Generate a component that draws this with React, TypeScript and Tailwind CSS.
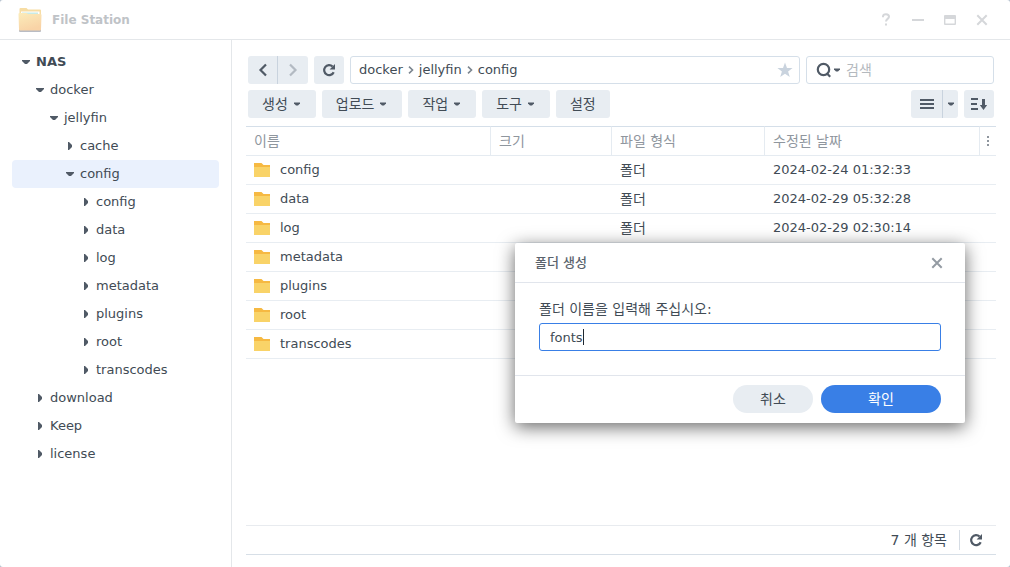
import { useState } from 'react'

type TreeNode = {
  name: string
  indent: string
  open?: boolean
  bold?: boolean
  selected?: boolean
}

const tree: TreeNode[] = [
  { name: 'NAS', indent: 'pl-[10px]', open: true, bold: true },
  { name: 'docker', indent: 'pl-[24px]', open: true },
  { name: 'jellyfin', indent: 'pl-[38px]', open: true },
  { name: 'cache', indent: 'pl-[54px]' },
  { name: 'config', indent: 'pl-[54px]', open: true, selected: true },
  { name: 'config', indent: 'pl-[70px]' },
  { name: 'data', indent: 'pl-[70px]' },
  { name: 'log', indent: 'pl-[70px]' },
  { name: 'metadata', indent: 'pl-[70px]' },
  { name: 'plugins', indent: 'pl-[70px]' },
  { name: 'root', indent: 'pl-[70px]' },
  { name: 'transcodes', indent: 'pl-[70px]' },
  { name: 'download', indent: 'pl-[24px]' },
  { name: 'Keep', indent: 'pl-[24px]' },
  { name: 'license', indent: 'pl-[24px]' },
]

type FileRow = {
  name: string
  type?: string
  date?: string
}

const files: FileRow[] = [
  { name: 'config', type: '폴더', date: '2024-02-24 01:32:33' },
  { name: 'data', type: '폴더', date: '2024-02-29 05:32:28' },
  { name: 'log', type: '폴더', date: '2024-02-29 02:30:14' },
  { name: 'metadata' },
  { name: 'plugins' },
  { name: 'root' },
  { name: 'transcodes' },
]

const actions = [
  { label: '생성', menu: true },
  { label: '업로드', menu: true },
  { label: '작업', menu: true },
  { label: '도구', menu: true },
  { label: '설정', menu: false },
]

export default function App() {
  const [dialogOpen, setDialogOpen] = useState(true)

  return (
    <div className="bg-[#b4c0ce] font-['DejaVu_Sans','Noto_Sans_CJK_KR',sans-serif] text-[13px] leading-5 text-[#414b55]">
      <div className="relative flex min-h-screen flex-col overflow-hidden rounded-[3px] bg-white">
        <TitleBar />
        <div className="flex flex-1">
          <Sidebar />
          <main className="flex min-w-0 flex-1 flex-col px-[14px] pt-4 pb-3">
            <Toolbar />
            <FileTable />
            <footer className="mt-auto flex h-[30px] items-center justify-end border-t border-b border-t-[#e8ebef] border-b-[#d7dfe7] pr-[13px]">
              <span className="pr-3 text-sm leading-5">7 개 항목</span>
              <span className="h-5 w-px bg-[#d5dce4]" />
              <button aria-label="새로 고침" className="ml-[9px]">
                <RefreshIcon />
              </button>
            </footer>
          </main>
        </div>
        {dialogOpen && <CreateFolderDialog onClose={() => setDialogOpen(false)} />}
      </div>
    </div>
  )
}

function TitleBar() {
  return (
    <header className="flex h-10 items-center border-b border-[#e4e7ea] pr-5 pl-[18px]">
      <AppIcon />
      <h1 className="ml-[10px] text-xs font-bold text-[#bfc3c7]">File Station</h1>
      <div className="ml-auto flex gap-4 text-[#d5d7da]">
        <button aria-label="도움말" className="flex w-4 justify-center">
          <svg width="16" height="16" viewBox="0 0 16 16" fill="none" stroke="currentColor" strokeWidth="2">
            <path d="M5 5.2V4.6C5 3 6.2 2.2 8 2.2s3 .9 3 2.5c0 2.1-3 2.3-3 4.8" />
            <path d="M8 11.5v2" />
          </svg>
        </button>
        <button aria-label="최소화">
          <svg width="16" height="16" viewBox="0 0 16 16" fill="currentColor">
            <path d="M2 7h12v2H2z" />
          </svg>
        </button>
        <button aria-label="최대화">
          <svg width="16" height="16" viewBox="0 0 16 16" fill="currentColor" fillRule="evenodd">
            <path d="M3 3h10a1 1 0 0 1 1 1v8a1 1 0 0 1-1 1H3a1 1 0 0 1-1-1V4a1 1 0 0 1 1-1zm.4 4v4.6h9.2V7z" />
          </svg>
        </button>
        <button aria-label="닫기">
          <CloseIcon />
        </button>
      </div>
    </header>
  )
}

function Sidebar() {
  return (
    <nav className="w-[232px] shrink-0 border-r border-[#e4e7ea] px-3 pt-2">
      <ul>
        {tree.map((node, i) => (
          <li key={i}>
            <button
              className={`flex h-7 w-full items-center gap-1.5 rounded text-left leading-[22px] ${node.indent} ${
                node.selected ? 'bg-[#eaf1fd]' : ''
              } ${node.bold ? 'font-bold' : ''}`}
            >
              <svg width="8" height="8" viewBox="0 0 8 8" fill="#505a66">
                {node.open ? <path d="M0 2h8v1L5 6H3L0 3z" /> : <path d="M2 0h1l3 3v2L3 8H2z" />}
              </svg>
              {node.name}
            </button>
          </li>
        ))}
      </ul>
    </nav>
  )
}

function Toolbar() {
  return (
    <div className="flex flex-col gap-1.5 px-0.5 pb-2">
      <div className="flex h-7 gap-1.5">
        <div className="flex overflow-hidden rounded-[3px] bg-[#e8edf2]">
          <button aria-label="뒤로" className="flex w-[30px] items-center justify-center border-r border-[#c9d3de]">
            <svg width="10" height="14" viewBox="0 0 10 14" fill="none" stroke="#505a66" strokeWidth="2.2">
              <path d="M8 1.5 2.5 7 8 12.5" />
            </svg>
          </button>
          <button aria-label="앞으로" className="flex w-[30px] items-center justify-center">
            <svg width="10" height="14" viewBox="0 0 10 14" fill="none" stroke="#b3bac2" strokeWidth="2.2">
              <path d="M2 1.5 7.5 7 2 12.5" />
            </svg>
          </button>
        </div>
        <button
          aria-label="새로 고침"
          className="flex w-[30px] items-center justify-center rounded-[3px] bg-[#e8edf2]"
        >
          <RefreshIcon />
        </button>
        <div className="flex min-w-0 flex-1 items-center rounded-[3px] border border-[#d5dfe9] pr-1.5 pl-2">
          <a href="#docker">docker</a>
          <PathArrow />
          <a href="#jellyfin">jellyfin</a>
          <PathArrow />
          <a href="#config">config</a>
          <button aria-label="즐겨찾기" className="ml-auto">
            <svg width="16" height="16" viewBox="0 0 16 16" fill="#c9d3de">
              <path d="M8 .5 10 6h5.6l-4.5 3.4 1.7 5.6L8 11.7 3.2 15l1.7-5.6L.4 6H6z" />
            </svg>
          </button>
        </div>
        <div className="flex w-[188px] items-center rounded-[3px] border border-[#d5dfe9] pl-[9px]">
          <button aria-label="검색 옵션" className="flex items-center gap-0.5">
            <svg width="16" height="16" viewBox="0 0 16 16" fill="none" stroke="#505a66" strokeWidth="2.2">
              <circle cx="7.5" cy="7.5" r="5.7" />
              <path d="m10.5 11 3.7 3.7" />
            </svg>
            <Caret />
          </button>
          <input
            type="text"
            aria-label="검색"
            placeholder="검색"
            className="ml-1.5 w-full min-w-0 text-sm outline-none placeholder:text-[#b4b9be]"
          />
        </div>
      </div>

      <div className="flex h-7 gap-1.5">
        {actions.map(action => (
          <button
            key={action.label}
            className={`flex items-center gap-1.5 rounded-[3px] bg-[#e8edf2] pl-[14px] text-sm ${
              action.menu ? 'pr-4' : 'pr-[14px]'
            }`}
          >
            {action.label}
            {action.menu && <Caret />}
          </button>
        ))}
        <div className="ml-auto flex overflow-hidden rounded-[3px] bg-[#e8edf2]">
          <button aria-label="보기 방식" className="flex w-8 items-center justify-center border-r border-[#c9d3de]">
            <svg width="14" height="10" viewBox="0 0 14 10" fill="#505a66">
              <path d="M0 0h14v2H0zM0 4h14v2H0zM0 8h14v2H0z" />
            </svg>
          </button>
          <button aria-label="보기 메뉴" className="flex w-[15px] items-center justify-center">
            <Caret />
          </button>
        </div>
        <button aria-label="정렬" className="flex w-[30px] items-center justify-center rounded-[3px] bg-[#e8edf2]">
          <svg width="16" height="12" viewBox="0 0 16 12" fill="#505a66">
            <path d="M0 0h7v2H0zM0 5h6v2H0zM0 10h7v2H0zM11 1h3v6h2.2l-3.7 5-3.7-5H11z" />
          </svg>
        </button>
      </div>
    </div>
  )
}

function FileTable() {
  const head = 'h-[30px] border-t border-b border-t-[#d5dfe9] border-b-[#e5ebf1] px-2 text-left text-sm leading-5 font-normal text-[#8f969e]'
  const cell = 'h-[29px] border-b border-[#e8edf2] px-2'

  return (
    <table className="w-full table-fixed border-separate border-spacing-0">
      <colgroup>
        <col className="w-[245px]" />
        <col className="w-[121px]" />
        <col className="w-[153px]" />
        <col />
        <col className="w-4" />
      </colgroup>
      <thead>
        <tr>
          <th className={`${head} border-r border-r-[#e5ebf1]`}>이름</th>
          <th className={`${head} border-r border-r-[#e5ebf1]`}>크기</th>
          <th className={`${head} border-r border-r-[#e5ebf1]`}>파일 형식</th>
          <th className={`${head} border-r border-r-[#e5ebf1]`}>수정된 날짜</th>
          <th className="border-t border-b border-t-[#d5dfe9] border-b-[#e5ebf1] p-0">
            <button aria-label="열 선택" className="flex w-full justify-center">
              <svg width="2" height="10" viewBox="0 0 2 10" fill="#8f969e">
                <path d="M0 0h2v2H0zM0 4h2v2H0zM0 8h2v2H0z" />
              </svg>
            </button>
          </th>
        </tr>
      </thead>
      <tbody>
        {files.map(file => (
          <tr key={file.name}>
            <td className={cell}>
              <span className="flex items-center gap-[10px] leading-[22px]">
                <svg width="16" height="14" viewBox="0 0 16 14">
                  <path d="M0 0h7.5L9.5 2H16v6H0z" fill="#f6b942" />
                  <path d="M0 4h16v10H0z" fill="#f9d368" />
                </svg>
                {file.name}
              </span>
            </td>
            <td className={cell}></td>
            <td className={`${cell} text-sm leading-5`}>{file.type}</td>
            <td className={cell}>{file.date}</td>
            <td className="border-b border-[#e8edf2]"></td>
          </tr>
        ))}
      </tbody>
    </table>
  )
}

function CreateFolderDialog({ onClose }: { onClose: () => void }) {
  const [name, setName] = useState('fonts')

  return (
    <form
      role="dialog"
      aria-labelledby="dialog-title"
      onSubmit={e => {
        e.preventDefault()
        onClose()
      }}
      className="absolute top-[243px] left-[515px] w-[450px] rounded-xs bg-white shadow-[0_4px_18px_rgba(0,0,0,0.6)]"
    >
      <div className="flex h-10 items-center justify-between border-b border-[#e1e5ec] px-5">
        <h2 id="dialog-title" className="font-medium text-[#5a636d]">폴더 생성</h2>
        <button type="button" aria-label="닫기" onClick={onClose} className="text-[#949ba3]">
          <CloseIcon />
        </button>
      </div>
      <div className="px-6 pt-4 pb-6">
        <label htmlFor="folder-name" className="block text-sm leading-5">폴더 이름을 입력해 주십시오:</label>
        <div className="relative mt-1">
          <input
            id="folder-name"
            type="text"
            value={name}
            onChange={e => setName(e.target.value)}
            className="block h-7 w-full rounded-[3px] border border-[#397fe6] px-[10px] outline-none"
          />
          {name === 'fonts' && <span className="absolute top-1.5 left-11 h-4 w-px bg-[#202830]" />}
        </div>
      </div>
      <div className="flex justify-end gap-2 border-t border-[#e1e5ec] px-6 pt-[9px] pb-[10px] text-sm">
        <button type="button" onClick={onClose} className="h-7 w-20 rounded-full bg-[#e8edf2]">취소</button>
        <button type="submit" className="h-7 w-[120px] rounded-full bg-[#397fe6] text-white">확인</button>
      </div>
    </form>
  )
}

function Caret() {
  return (
    <svg width="6" height="4" viewBox="0 0 6 4" fill="#505a66">
      <path d="M0 .5h6v1L4 3.5H2l-2-2z" />
    </svg>
  )
}

function PathArrow() {
  return (
    <svg width="6" height="8" viewBox="0 0 6 8" fill="none" stroke="#7b858f" strokeWidth="1.6" className="mx-[5px]">
      <path d="M1 .7 4.5 4 1 7.3" />
    </svg>
  )
}

function RefreshIcon() {
  return (
    <svg width="14" height="14" viewBox="0 0 14 14">
      <path d="M11.7 9.2A5 5 0 1 1 10.6 3.5" fill="none" stroke="#505a66" strokeWidth="2.2" />
      <path d="M13 1v5.6H7.6z" fill="#505a66" />
    </svg>
  )
}

function CloseIcon() {
  return (
    <svg width="16" height="16" viewBox="0 0 16 16" fill="none" stroke="currentColor" strokeWidth="2">
      <path d="m3.3 3.3 9.4 9.4M12.7 3.3l-9.4 9.4" />
    </svg>
  )
}

function AppIcon() {
  return (
    <svg width="24" height="24" viewBox="0 0 24 24">
      <defs>
        <linearGradient id="folder-front" x1="0" y1="0" x2="0.4" y2="1">
          <stop offset="0" stopColor="#fbecba" />
          <stop offset="1" stopColor="#f9d3a6" />
        </linearGradient>
      </defs>
      <path d="M1.5 1a1 1 0 0 1 1-1h6l1.5 1.5h12a1 1 0 0 1 1 1V12h-21.5z" fill="#f7dda4" />
      <path d="M3 3.5h18.5V10H3z" fill="#fff" />
      <path d="M4 4.5h16V10H4z" fill="#c9ebe6" />
      <path d="M3 6h19v4H3z" fill="#f4fbf8" />
      <path d="M1 21h22v2a1 1 0 0 1-1 1H2a1 1 0 0 1-1-1z" fill="#b9bcc4" />
      <path d="M.5 6a1 1 0 0 1 1-1h7L10 6h12.5a1 1 0 0 1 1 1l-.5 14.5a1 1 0 0 1-1 1H2a1 1 0 0 1-1-1z" fill="url(#folder-front)" />
    </svg>
  )
}
